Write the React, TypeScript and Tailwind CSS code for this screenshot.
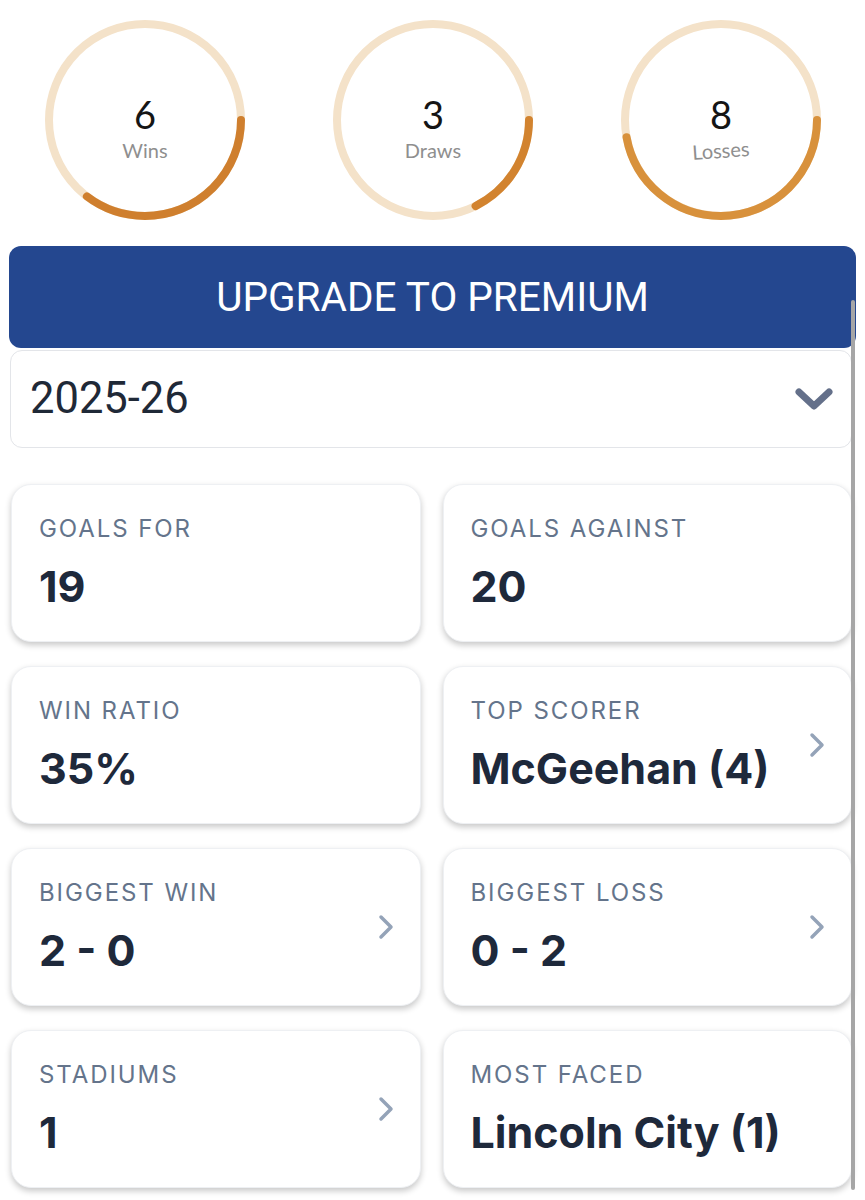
const RING_R = 96;
const RING_C = 2 * Math.PI * RING_R;

interface RingProps {
  value: number;
  label: string;
  total: number;
  color: string;
  tilt?: boolean;
}

function Ring({ value, label, total, color, tilt }: RingProps) {
  const frac = value / total;
  return (
    <div className="relative w-[200px] h-[200px]">
      <svg width="200" height="200" viewBox="0 0 200 200" className="absolute inset-0">
        <circle cx="100" cy="100" r={RING_R} fill="none" stroke="#f4e2c9" strokeWidth="8" />
        <circle
          cx="100"
          cy="100"
          r={RING_R}
          fill="none"
          stroke={color}
          strokeWidth="8"
          strokeLinecap="round"
          strokeDasharray={`${RING_C * frac} ${RING_C}`}
        />
      </svg>
      <div className="absolute inset-0 flex flex-col items-center justify-center pt-[16px] font-['Lato',sans-serif]">
        <span className="text-[38px] leading-[40px] text-[#151515]">{value}</span>
        <span
          className={`text-[20px] leading-[24px] text-[#8f8f8f] mt-[4px] ${tilt ? "-rotate-[4deg]" : ""}`}
        >
          {label}
        </span>
      </div>
    </div>
  );
}

function ChevronRight() {
  return (
    <svg width="16" height="26" viewBox="0 0 16 26" fill="none">
      <path d="M3 3 L13 13 L3 23" stroke="#94a3b8" strokeWidth="3.5" strokeLinecap="round" strokeLinejoin="round" />
    </svg>
  );
}

interface StatProps {
  label: string;
  value: string;
  link?: boolean;
}

function StatCard({ label, value, link }: StatProps) {
  return (
    <div className="h-[158px] rounded-[20px] bg-white border border-[#eef0f3] shadow-[0_3px_6px_rgba(0,0,0,0.22)] flex items-center pr-[26px]">
      <div className="flex-1 self-start pt-[29px] pl-[27px] font-['Inter',sans-serif]">
        <div className="text-[24px] leading-[29px] tracking-[0.08em] text-[#64748b]">{label}</div>
        <div className="mt-[17px] text-[43px] leading-[52px] font-bold text-[#1e293b]">{value}</div>
      </div>
      {link && <ChevronRight />}
    </div>
  );
}

const stats: StatProps[] = [
  { label: "GOALS FOR", value: "19" },
  { label: "GOALS AGAINST", value: "20" },
  { label: "WIN RATIO", value: "35%" },
  { label: "TOP SCORER", value: "McGeehan (4)", link: true },
  { label: "BIGGEST WIN", value: "2 - 0", link: true },
  { label: "BIGGEST LOSS", value: "0 - 2", link: true },
  { label: "STADIUMS", value: "1", link: true },
  { label: "MOST FACED", value: "Lincoln City (1)" },
];

export default function App() {
  return (
    <div className="relative w-[865px] h-[1200px] bg-white overflow-hidden">
      <div className="flex gap-[88px] pl-[45px] pt-[20px]">
        <Ring value={6} label="Wins" total={17} color="#cf7f2e" />
        <Ring value={3} label="Draws" total={17} color="#d2832f" />
        <Ring value={8} label="Losses" total={17} color="#d8913c" tilt />
      </div>

      <button className="mt-[26px] ml-[9px] w-[847px] h-[102px] rounded-[12px] bg-[#24478f] text-white font-['Roboto',sans-serif] text-[40.5px] flex items-center justify-center">
        UPGRADE TO PREMIUM
      </button>

      <div className="mt-[2px] ml-[10px] w-[842px] h-[98px] rounded-[12px] border border-[#e3e5e9] bg-white flex items-center justify-between pl-[19px] pr-[19px]">
        <span className="font-['Roboto',sans-serif] text-[43.5px] text-[#1f2937]">2025-26</span>
        <svg width="40" height="24" viewBox="0 0 40 24" fill="none" className="mr-[-2px]">
          <path d="M5 5 L20 19 L35 5" stroke="#64708a" strokeWidth="7" strokeLinecap="round" strokeLinejoin="round" />
        </svg>
      </div>

      <div className="mt-[36px] ml-[11px] w-[841px] grid grid-cols-2 gap-x-[22px] gap-y-[24px]">
        {stats.map((s) => (
          <StatCard key={s.label} {...s} />
        ))}
      </div>

      <div className="absolute left-[851px] top-[300px] w-[4px] h-[890px] rounded-full bg-[#a6a6a6]" />
    </div>
  );
}
